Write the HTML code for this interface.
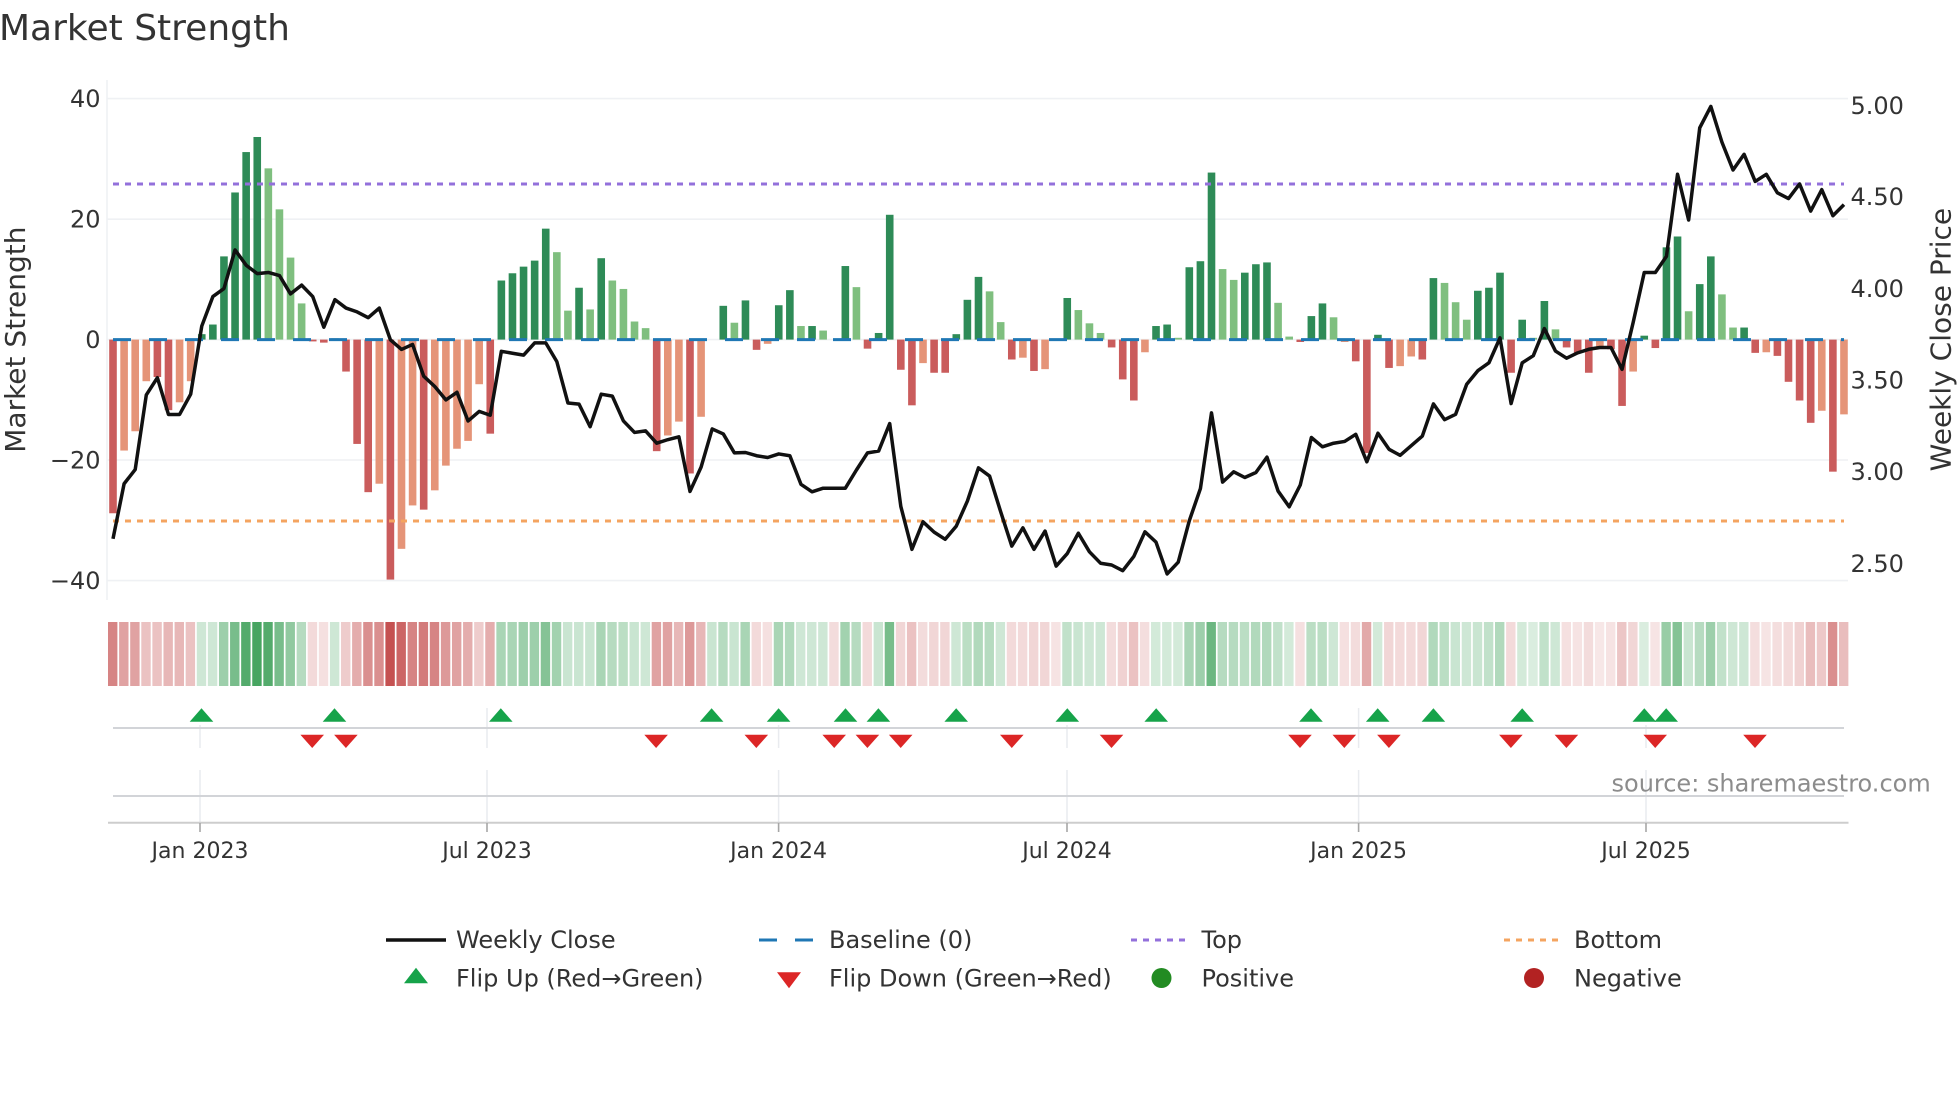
<!DOCTYPE html>
<html lang="en">
<head>
<meta charset="utf-8">
<title>Market Strength</title>
<style>
html,body{margin:0;padding:0;background:#fff;width:1960px;height:1102px;overflow:hidden}
svg{display:block}
text{font-family:"DejaVu Sans","Liberation Sans",sans-serif;fill:#333}
.t{font-size:24px}
.x{font-size:22px;text-anchor:middle}
.l{font-size:24px}
</style>
</head>
<body>
<svg xmlns="http://www.w3.org/2000/svg" width="1960" height="1102" viewBox="0 0 1960 1102">
<rect width="1960" height="1102" fill="#fff"/>
<text x="-1" y="40" font-size="36">Market Strength</text>

<!-- grid -->
<g stroke="#eff1f4" stroke-width="1.6" fill="none">
<path d="M107 80V600"/>
<path d="M107 98.6H1848M107 219.2H1848M107 339.6H1848M107 460H1848M107 580.6H1848"/>
</g>

<g id="bars"></g>

<!-- reference lines -->
<path d="M113 339.6H1844" stroke="#1f77b4" stroke-width="3" stroke-dasharray="18 18" fill="none"/>
<path d="M113 184H1844" stroke="#9370db" stroke-width="3" stroke-dasharray="6 6" fill="none"/>
<path d="M113 521H1844" stroke="#f4a460" stroke-width="3" stroke-dasharray="6 6" fill="none"/>

<polyline id="price" fill="none" stroke="#111" stroke-width="3.5" stroke-linejoin="round" stroke-linecap="butt" points=""/>

<!-- left axis -->
<g text-anchor="end">
<text x="100.5" y="107" class="t">40</text>
<text x="100.5" y="227.5" class="t">20</text>
<text x="100.5" y="348" class="t">0</text>
<text x="100.5" y="468.4" class="t">−20</text>
<text x="100.5" y="589.2" class="t">−40</text>
</g>
<text transform="translate(25 339.6) rotate(-90)" text-anchor="middle" font-size="28">Market Strength</text>

<!-- right axis -->
<g>
<text x="1850.5" y="113.9" class="t">5.00</text>
<text x="1850.5" y="205" class="t">4.50</text>
<text x="1850.5" y="296.8" class="t">4.00</text>
<text x="1850.5" y="388.6" class="t">3.50</text>
<text x="1850.5" y="480" class="t">3.00</text>
<text x="1850.5" y="571.8" class="t">2.50</text>
</g>
<text transform="translate(1950.5 339.6) rotate(-90)" text-anchor="middle" font-size="28">Weekly Close Price</text>

<g id="heat"></g>

<!-- lower panels -->
<g stroke="#e9ebef" stroke-width="1.5" fill="none">
<path d="M200 725V748M487 708V748M778.6 725V748M1067 725V748M1358.6 708V748M1646 725V748"/>
<path d="M200 770V822M487 770V822M778.6 770V822M1067 770V822M1358.6 770V822M1646 770V822"/>
</g>
<path d="M113 728H1844M113 796H1844" stroke="#d2d4d8" stroke-width="2" fill="none"/>
<path d="M108 822.7H1848.5" stroke="#cdcdcd" stroke-width="2" fill="none"/>
<path d="M200 823V832M487 823V832M778.6 823V832M1067 823V832M1358.6 823V832M1646 823V832" stroke="#a6a6a6" stroke-width="1.6" fill="none"/>
<g id="flips"></g>

<text x="1611.5" y="791.7" font-size="24" style="fill:#8c8c8c">source: sharemaestro.com</text>

<text x="200" y="858" class="x">Jan 2023</text>
<text x="487" y="858" class="x">Jul 2023</text>
<text x="778.6" y="858" class="x">Jan 2024</text>
<text x="1067" y="858" class="x">Jul 2024</text>
<text x="1358.6" y="858" class="x">Jan 2025</text>
<text x="1646" y="858" class="x">Jul 2025</text>

<!-- legend -->
<path d="M386 940H446" stroke="#111" stroke-width="3.5"/>
<text x="456" y="948" class="l">Weekly Close</text>
<path d="M759 940H813" stroke="#1f77b4" stroke-width="3" stroke-dasharray="18 18"/>
<text x="829" y="948" class="l">Baseline (0)</text>
<path d="M1131 940H1187" stroke="#9370db" stroke-width="3" stroke-dasharray="6 6"/>
<text x="1201.5" y="948" class="l">Top</text>
<path d="M1504 940H1560" stroke="#f4a460" stroke-width="3" stroke-dasharray="6 6"/>
<text x="1574" y="948" class="l">Bottom</text>

<path d="M416 967.7L428 983.3H404Z" fill="#16a34a"/>
<text x="456" y="986.5" class="l">Flip Up (Red→Green)</text>
<path d="M777 972.3H801L789 988.3Z" fill="#dc2626"/>
<text x="829" y="986.5" class="l">Flip Down (Green→Red)</text>
<circle cx="1161.5" cy="978" r="10" fill="#228b22"/>
<text x="1201.5" y="986.5" class="l">Positive</text>
<circle cx="1534" cy="978" r="10" fill="#b22222"/>
<text x="1574" y="986.5" class="l">Negative</text>

<script>
(function(){
var NS="http://www.w3.org/2000/svg";
function el(n,a,p){var e=document.createElementNS(NS,n);for(var k in a)e.setAttribute(k,a[k]);p.appendChild(e);return e;}
var STEP=11.096,X0=113,Z=339.6,U=6.03;
var B=("-28.8d -18.4l -15.2l -6.9l -6.2d -11.7d -10.4l -6.9l 0.9d 2.5d 13.8d 24.4d 31.1d 33.6d 28.4l 21.6l 13.6l 6l -0.3d -0.5d 0.2d -5.3d -17.3d -25.3d -23.9l -39.8d -34.7l -27.5l -28.2d -25l -20.9l -18.1l -16.8l -7.4l -15.6d "+
"9.8d 11d 12.1d 13.1d 18.4d 14.5l 4.8l 8.6d 5l 13.5d 9.8l 8.4l 3l 1.9l -18.5d -15.9l -13.6l -22.2d -12.8l 0d 5.6d 2.8l 6.5d -1.7d -0.7l 5.7d 8.2d 2.25l 2.25d 1.5l 0d 12.2d 8.7l -1.5d 1.1d 20.7d -5d -10.9d -3.9l -5.5d -5.5d 0.9d 6.6d 10.4d 8l 2.9l -3.3d -3l -5.2d -4.9l 0d 6.9d 4.9l 2.7l 1.1l -1.3d -6.6d -10.1d -2.1l 2.25d 2.5d 0.3l 12d 13d 27.7d 11.7l 9.9l 11.1d 12.5d 12.8d 6.1l 0.5l -0.4d 3.9d "+
"6d 3.7l -0.4l -3.6d -18.8d 0.8d -4.7d -4.4l -2.8l -3.3d 10.2d 9.4l 6.2l 3.3l 8.1d 8.6d 11.1d -5.5d 3.3d 0.3l 6.4d 1.7l -1.3d -2.2d -5.5d -1.2l -1.6d -11d -5.3l 0.65d -1.4d 15.3d 17.1d 4.7l 9.2d 13.8d 7.5l 2l 2d -2.2d -2.1l -2.7d -7d -10.1d -13.8d -11.8l -21.9d -12.4l").split(" ");
var c={pd:"#2e8b57",pl:"#7fbf7f",nd:"#ca5c5c",nl:"#e59478"},g=document.getElementById("bars");
B.forEach(function(s,k){
  var v=parseFloat(s),t=s.slice(-1);if(v===0)return;
  var h=Math.abs(v)*U,x=X0+STEP*k-3.8;
  el("rect",{x:x.toFixed(2),y:(v>0?Z-h:Z).toFixed(2),width:7.6,height:h.toFixed(2),fill:c[(v>0?"p":"n")+t]},g);
});
var z1=[1408,1264,1227,1032,987,1083,1083,1030,852,775,754,653,693,715,712,720,768,745,775,855,783,805,815,830,805,888,913,900,983,1010,1045,1025,1100,1075,1085,918,923,928,896,896,945,1053,1056,1115,1030,1035,1100,1130,1126];
var z2=[1073,1063,1055,1208,1140,1033,1047,1100,1099,1108,1113,1103,1108,1188,1209,1199,1199,1199,1148,1100,1095,1018,1250,1370,1293,1322,1342,1305,1235,1142,1165,1265,1361,1310,1370,1319,1417,1382,1325,1377,1409,1414,1430,1390,1321,1350,1439,1406,1290,1200,988,1182,1153,1169,1155,1112,1207,1251,1190,
1057,1083,1073,1068,1048,1125,1045,1090,1107,1080,1053,963,1007,992,908,870,848,778,962,848,828,752,815,835,820,810,805,805,866,735,595,595,550,320,448,190,130,230,308,264,340,320,372,388,347,423,363,436,405];
var pts=z1.map(function(y){return y/2.613;}).concat(z2.map(function(y){return y/2.8+60;}));
document.getElementById("price").setAttribute("points",pts.map(function(y,k){return (X0+STEP*k).toFixed(2)+","+y.toFixed(2);}).join(" "));
var H=("r.6 r.45 r.45 r.3 r.3 r.35 r.35 r.3 g.2 g.2 g.4 g.55 g.7 g.75 g.7 g.55 g.45 g.3 r.18 r.15 g.2 r.25 r.4 r.55 r.55 r.85 r.75 r.6 r.65 r.6 r.5 r.45 r.4 r.25 r.4 "+
"g.35 g.35 g.4 g.4 g.5 g.38 g.22 g.22 g.22 g.35 g.3 g.28 g.22 g.2 r.45 r.45 r.35 r.5 r.35 g.22 g.3 g.22 g.35 "+
"r.18 r.15 g.35 g.32 g.2 g.2 g.2 r.17 g.38 g.3 r.18 g.22 g.55 r.2 r.3 r.17 r.2 r.2 g.2 g.28 g.32 g.3 g.2 r.18 r.18 r.2 r.2 r.14 g.25 g.22 g.2 g.2 r.17 r.22 r.3 r.16 g.18 g.18 g.18 g.35 g.4 g.6 g.3 g.3 g.28 g.32 g.32 g.25 g.18 r.15 g.28 g.28 g.2 r.15 r.17 r.42 g.18 r.2 r.18 r.18 "+
"r.2 g.32 g.28 g.22 g.2 g.22 g.25 g.32 r.18 g.18 g.15 g.25 g.2 r.15 r.14 r.17 r.12 r.14 r.28 r.2 g.15 r.13 g.42 g.5 g.22 g.3 g.4 g.25 g.2 g.2 r.16 r.13 r.16 r.18 r.22 r.32 r.27 r.55 r.32").split(" ");
var hg=document.getElementById("heat");
H.forEach(function(s,k){
  var a=parseFloat(s.slice(1))*(s[0]==="r"?1.05:1.14);
  el("rect",{x:(108+11.096*k).toFixed(2),y:622,width:9.4,height:64,fill:s[0]==="r"?"rgb(190,60,60)":"rgb(40,150,70)","fill-opacity":a.toFixed(3)},hg);
});
var fg=document.getElementById("flips");
[201.5,334.5,500.8,711.6,778.6,845.5,878.4,956.2,1067.3,1156.2,1311,1377.7,1433.4,1522.2,1644.3,1666.2].forEach(function(x){
  el("path",{d:"M"+x+" 708.3L"+(x+11.8)+" 721.7H"+(x-11.8)+"Z",fill:"#16a34a"},fg);
});
[312.2,345.9,656.1,756.3,834.2,867.4,900.7,1011.8,1111.5,1300,1344.3,1388.9,1510.9,1566.4,1655.2,1755].forEach(function(x){
  el("path",{d:"M"+(x-11.8)+" 734.7H"+(x+11.8)+"L"+x+" 748Z",fill:"#dc2626"},fg);
});
})();
</script>
</svg>
</body>
</html>
